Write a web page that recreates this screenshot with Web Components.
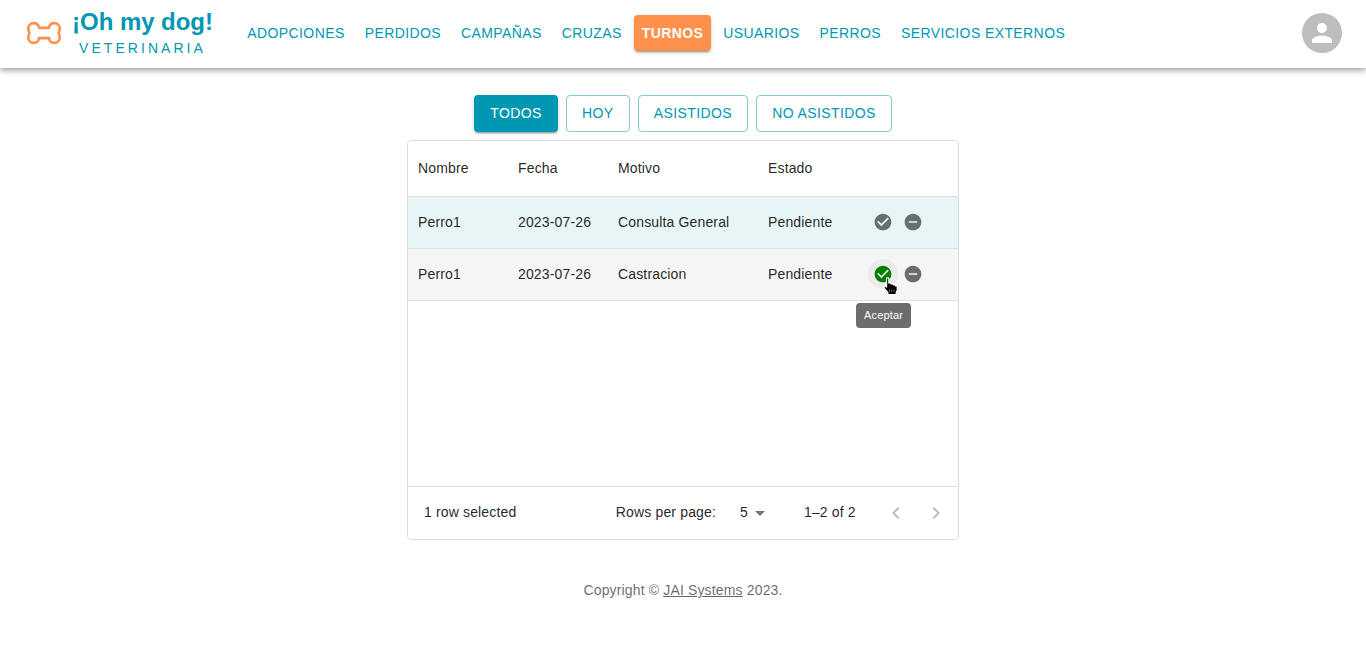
<!DOCTYPE html>
<html lang="es">
<head>
<meta charset="utf-8">
<title>¡Oh my dog! Veterinaria</title>
<style>
html,body{margin:0;height:100%;background:#fff;overflow:hidden}
body{font:14px/1.5 "Liberation Sans",Arial,sans-serif;letter-spacing:.15px;color:rgba(0,0,0,.87);--primary:#0097b2;--accent:#ff914d;--line:#dedede}
</style>
</head>
<body>
<omd-app></omd-app>
<script>
const define=(name,html)=>{
  const tpl=document.createElement('template');
  tpl.innerHTML=html;
  customElements.define(name,class extends HTMLElement{
    constructor(){super();this.attachShadow({mode:'open'}).append(tpl.content.cloneNode(true));}
  });
};

define('omd-button',`<style>
:host{display:flex;align-items:center;justify-content:center;box-sizing:border-box;height:36.5px;padding:0 8px;border-radius:4px;color:var(--primary);font-size:14px;line-height:24.5px;letter-spacing:.4px;text-transform:uppercase;white-space:nowrap}
:host([kind=outlined]){padding:0 15.1px;border:1px solid rgba(0,151,178,.5)}
:host([kind=contained]){padding:0 16.2px;background:var(--primary);color:#fff;box-shadow:0 3px 1px -2px rgba(0,0,0,.2),0 2px 2px rgba(0,0,0,.14),0 1px 5px rgba(0,0,0,.12)}
:host([kind=current]){background:var(--accent);color:#fff;font-weight:700;box-shadow:0 3px 1px -2px rgba(0,0,0,.2),0 2px 2px rgba(0,0,0,.14),0 1px 5px rgba(0,0,0,.12)}
</style><slot></slot>`);

const icons={
  check:'M12 2C6.48 2 2 6.48 2 12s4.48 10 10 10 10-4.48 10-10S17.52 2 12 2zm-2 15-5-5 1.41-1.41L10 14.17l7.59-7.59L19 8l-9 9z',
  minus:'M12 2C6.48 2 2 6.48 2 12s4.48 10 10 10 10-4.48 10-10S17.52 2 12 2zm5 11H7v-2h10v2z',
  left:'M15.41 7.41 14 6l-6 6 6 6 1.41-1.41L10.83 12z',
  right:'M10 6 8.59 7.41 13.17 12l-4.58 4.59L10 18l6-6z',
  drop:'M7 10l5 5 5-5z',
  person:'M12 12c2.21 0 4-1.79 4-4s-1.79-4-4-4-4 1.79-4 4 1.79 4 4 4zm0 2c-2.67 0-8 1.34-8 4v2h16v-2c0-2.66-5.33-4-8-4z'
};
customElements.define('omd-icon',class extends HTMLElement{
  connectedCallback(){
    const s=this.getAttribute('size')||24;
    this.attachShadow({mode:'open'}).innerHTML=`<style>:host{display:block;flex:none;width:${s}px;height:${s}px}svg{display:block}</style><svg width="${s}" height="${s}" viewBox="0 0 24 24" fill="currentColor"><path d="${icons[this.getAttribute('name')]}"/></svg>`;
  }
});

define('omd-logo',`<style>
:host{display:flex;align-items:center;color:var(--primary);width:188px}
svg{display:block;margin-right:10px;flex:none}
.name{width:141px;padding-top:2px;text-align:center}
b{display:block;font-size:24px;line-height:28px;letter-spacing:-.05px;white-space:nowrap}
span{display:block;font-size:14px;line-height:24px;letter-spacing:3.05px;white-space:nowrap}
</style>
<svg width="36" height="26" viewBox="0 0 36 26" fill="none" stroke="var(--accent)" stroke-width="2.6" stroke-linejoin="round"><path d="M13 7.9H23C23.5 4.8 25.7 3.1 28.2 3.1C31.4 3.1 33.8 5.4 33.8 8.4C33.8 10.2 33.1 11.7 32.5 13C33.1 14.3 33.8 15.8 33.8 17.6C33.8 20.6 31.4 22.9 28.2 22.9C25.7 22.9 23.5 21.2 23 18.1H13C12.5 21.2 10.3 22.9 7.8 22.9C4.6 22.9 2.2 20.6 2.2 17.6C2.2 15.8 2.9 14.3 3.5 13C2.9 11.7 2.2 10.2 2.2 8.4C2.2 5.4 4.6 3.1 7.8 3.1C10.3 3.1 12.5 4.8 13 7.9Z"/></svg>
<div class="name"><b>¡Oh my dog!</b><span>VETERINARIA</span></div>`);

define('omd-header',`<style>
:host{display:flex;align-items:center;box-sizing:border-box;height:68px;padding:0 24px 2px 26px;background:#fff;box-shadow:0 2px 4px -1px rgba(0,0,0,.2),0 4px 5px rgba(0,0,0,.14),0 1px 10px rgba(0,0,0,.12)}
nav{display:flex;gap:4px;margin-left:25.3px;flex:1}
.avatar{display:flex;align-items:center;justify-content:center;width:40px;height:40px;border-radius:50%;background:#bdbdbd;color:#fff}
</style>
<omd-logo></omd-logo>
<nav><omd-button>Adopciones</omd-button><omd-button>Perdidos</omd-button><omd-button>Campañas</omd-button><omd-button>Cruzas</omd-button><omd-button kind="current">Turnos</omd-button><omd-button>Usuarios</omd-button><omd-button>Perros</omd-button><omd-button>Servicios Externos</omd-button></nav>
<div class="avatar"><omd-icon name="person" size="30"></omd-icon></div>`);

define('omd-filters',`<style>:host{display:flex;justify-content:center;gap:8px}</style>
<omd-button kind="contained">Todos</omd-button><omd-button kind="outlined">Hoy</omd-button><omd-button kind="outlined">Asistidos</omd-button><omd-button kind="outlined">No asistidos</omd-button>`);

define('omd-row',`<style>
:host{display:grid;grid-template-columns:100px 100px 150px 100px 100px;align-items:center;box-sizing:border-box;height:52px;border-bottom:1px solid var(--line);white-space:nowrap}
:host([head]){height:56px}
:host([selected]){background:#e8f5f7}
:host([hovered]){background:#f5f5f5}
::slotted(*){padding:0 10px}
</style><slot></slot>`);

define('omd-tooltip',`<style>
:host{position:absolute;top:44px;left:-12px;box-sizing:border-box;width:55px;height:25px;padding:4px 0;text-align:center;border-radius:4px;background:rgba(97,97,97,.92);color:#fff;font-size:11px;line-height:17px;white-space:nowrap}
</style><slot></slot>`);

define('omd-actions',`<style>
:host{display:flex;margin-bottom:1px;color:#666e6f}
:host([active]){color:#6b6b6b}
.btn{position:relative;padding:5px;border-radius:50%}
:host([active]) .accept{background:#ebebeb}
:host([active]) .accept omd-icon{color:green}
.tip{display:none}
:host([active]) .tip{display:block}
.hand{position:absolute;left:15px;top:18px}
</style>
<div class="btn accept"><omd-icon name="check" size="20"></omd-icon>
<div class="tip"><omd-tooltip>Aceptar</omd-tooltip>
<svg class="hand" width="16" height="19" viewBox="0 0 16 19"><path d="M3.6 1.7Q3.6.7 4.7.7T5.8 1.7V6H8V7H10.4V8H12.6V9H14.2V13.6L13.2 15.2V17.6H4.9V15.4L1.2 11.4V9.2H2.8L3.6 10Z" fill="#000" stroke="#fff" stroke-width="1.2" stroke-linejoin="round"/><path d="M6.5 12.3v2.8M8.7 12.3v2.8M10.9 12.3v2.8" stroke="#888" stroke-width=".7"/></svg></div></div>
<div class="btn"><omd-icon name="minus" size="20"></omd-icon></div>`);

define('omd-pagination',`<style>
:host{display:flex;align-items:center;box-sizing:border-box;height:53px;padding:0 2px 0 16px;border-top:1px solid var(--line);white-space:nowrap}
.text{padding-bottom:2px}
.label{margin-left:auto}
.select{display:flex;align-items:center;margin-left:24px;width:32px}
.select omd-icon{color:#757575}
.range{margin-left:32px;width:52px}
.page{display:flex;color:#bdbdbd;margin-left:20px}
.page omd-icon{padding:8px}
</style>
<span class="text">1 row selected</span><span class="text label">Rows per page:</span>
<span class="select"><span class="text">5</span><omd-icon name="drop"></omd-icon></span><span class="text range">1–2 of 2</span>
<span class="page"><omd-icon name="left"></omd-icon><omd-icon name="right"></omd-icon></span>`);

define('omd-grid',`<style>
:host{display:flex;flex-direction:column;box-sizing:border-box;width:552px;height:400px;border:1px solid var(--line);border-radius:4px}
omd-pagination{margin-top:auto}
</style>
<omd-row head><span>Nombre</span><span>Fecha</span><span>Motivo</span><span>Estado</span></omd-row>
<omd-row selected><span>Perro1</span><span>2023-07-26</span><span>Consulta General</span><span>Pendiente</span><omd-actions></omd-actions></omd-row>
<omd-row hovered><span>Perro1</span><span>2023-07-26</span><span>Castracion</span><span>Pendiente</span><omd-actions active></omd-actions></omd-row>
<omd-pagination></omd-pagination>`);

define('omd-footer',`<style>:host{display:block;text-align:center;line-height:20px;color:rgba(0,0,0,.6)}a{color:inherit;text-decoration:underline}</style>Copyright © <a>JAI Systems</a> 2023.`);

define('omd-app',`<style>
:host{display:flex;flex-direction:column}
main{display:flex;flex-direction:column;align-items:center;padding-top:27px}
omd-grid{margin-top:8.5px}
omd-footer{margin-top:40px}
</style>
<omd-header></omd-header><main><omd-filters></omd-filters><omd-grid></omd-grid></main><omd-footer></omd-footer>`);
</script>
</body>
</html>
